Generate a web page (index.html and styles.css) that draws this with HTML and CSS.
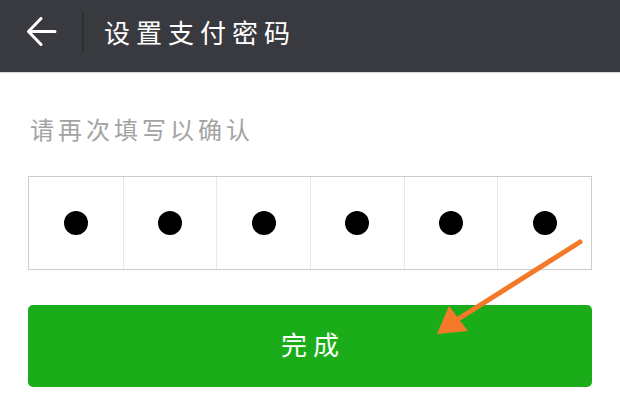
FILE: index.html
```html
<!DOCTYPE html>
<html lang="zh">
<head>
<meta charset="utf-8">
<link rel="stylesheet" href="styles.css">
</head>
<body>
<div class="page">
  <header class="topbar">
    <svg class="back" width="30" height="30" viewBox="0 0 30 30">
      <path d="M2 14.5 H28 M14 1.5 L1.5 14.5 L14 27.5" fill="none" stroke="#fff" stroke-width="3" stroke-linecap="round" stroke-linejoin="round"/>
    </svg>
    <span class="divider"></span>
    <h1 class="title">设置支付密码</h1>
  </header>
  <main class="content">
    <p class="hint">请再次填写以确认</p>
    <div class="pinbox">
      <div class="cell"><span class="dot"></span></div>
      <div class="cell"><span class="dot"></span></div>
      <div class="cell"><span class="dot"></span></div>
      <div class="cell"><span class="dot"></span></div>
      <div class="cell"><span class="dot"></span></div>
      <div class="cell"><span class="dot"></span></div>
    </div>
    <button class="done">完成</button>
  </main>
  <svg class="pointer" width="620" height="403" viewBox="0 0 620 403">
    <line x1="580" y1="242" x2="455" y2="321" stroke="#f47a2a" stroke-width="5" stroke-linecap="round"/>
    <polygon points="437,334 449,306 468,331" fill="#f47a2a"/>
  </svg>
</div>
</body>
</html>
```
FILE: styles.css
```css
html, body {
  margin: 0;
  padding: 0;
  background: #fff;
}
body {
  font-family: "Noto Sans CJK SC", "Noto Sans", sans-serif;
}
.page {
  position: relative;
  width: 620px;
  height: 403px;
  overflow: hidden;
}
.topbar {
  height: 73px;
  box-sizing: border-box;
  padding: 0 0 9px 0;
  background: #393a3f;
  border-bottom: 1px solid #d6d6d6;
  display: flex;
  align-items: center;
}
.back {
  margin-left: 27px;
  display: block;
}
.divider {
  width: 2px;
  height: 40px;
  margin-left: 25px;
  background: #2e2f33;
}
.title {
  margin: 0 0 0 20px;
  color: #fff;
  font-size: 26px;
  font-weight: normal;
  letter-spacing: 6px;
  line-height: 30px;
}
.content {
  padding: 0 28px;
}
.hint {
  margin: 40px 0 0 2px;
  font-size: 24px;
  line-height: 32px;
  color: #a3a3a3;
  letter-spacing: 4px;
}
.pinbox {
  margin-top: 31px;
  height: 94px;
  box-sizing: border-box;
  border: 1px solid #cdcdcd;
  display: grid;
  grid-template-columns: repeat(6, 1fr);
}
.cell {
  display: flex;
  align-items: center;
  justify-content: center;
  border-left: 1px solid #e8e8e8;
}
.cell:first-child {
  border-left: none;
}
.dot {
  width: 24px;
  height: 24px;
  border-radius: 50%;
  background: #000;
}
.done {
  display: block;
  width: 100%;
  margin-top: 35px;
  height: 82px;
  border: none;
  border-radius: 5px;
  background: #1aad19;
  color: #fff;
  font-family: inherit;
  font-size: 26px;
  letter-spacing: 6px;
  padding: 0 0 5px 6px;
}
.pointer {
  position: absolute;
  left: 0;
  top: 0;
  pointer-events: none;
}
```
